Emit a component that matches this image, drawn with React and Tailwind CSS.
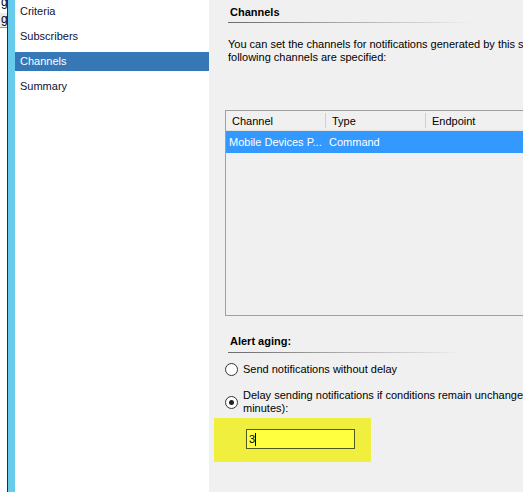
import React from 'react'

const font = { fontFamily: '"Liberation Sans", Arial, sans-serif' }

function Radio({ checked }) {
  return (
    <span className="w-[13px] h-[13px] shrink-0 rounded-full border border-[#333] bg-white flex items-center justify-center">
      {checked && <span className="w-[5px] h-[5px] rounded-full bg-[#222]" />}
    </span>
  )
}

function SectionTitle({ children }) {
  return <div className="ml-[21px] h-[14px] leading-[14px] font-bold text-black">{children}</div>
}

export default function App() {
  const steps = ['Criteria', 'Subscribers', 'Channels', 'Summary']

  return (
    <div className="w-[523px] h-[492px] overflow-hidden flex bg-[#f0f0f0] text-[11px] text-black" style={font}>
      {/* edge of the window behind */}
      <div className="w-[7px] shrink-0 bg-white overflow-hidden flex flex-col">
        <div className="h-[10px] -mt-[3px] leading-[10px] text-[12px] pl-[1px]">g</div>
        <div className="mt-[6px] h-[15px] leading-[13px] text-[12px] pl-[1px] bg-[#ececec] border-b border-[#9a9a9a]">g</div>
      </div>
      <div className="w-px shrink-0 bg-[#2b2b2b]" />
      <div className="w-[7px] shrink-0 bg-[#69cbec]" />

      {/* wizard steps */}
      <div className="w-[194px] shrink-0 bg-white pt-[2px] flex flex-col gap-[6px]">
        {steps.map((s) => (
          <div
            key={s}
            className={
              'h-[19px] leading-[19px] pl-[5px] ' +
              (s === 'Channels' ? 'bg-[#3677b5] text-white' : 'text-[#111133]')
            }
          >
            {s}
          </div>
        ))}
      </div>

      {/* page */}
      <div className="flex-1 min-w-0 overflow-hidden flex flex-col pt-[5px]">
        <SectionTitle>Channels</SectionTitle>
        <div className="ml-[19px] mt-[3px] w-[245px] h-px bg-linear-to-r from-[#6a6a6a] to-transparent" />

        <div className="ml-[19px] mt-[15px] leading-[13px] whitespace-nowrap">
          <div>You can set the channels for notifications generated by this subscription. The</div>
          <div>following channels are specified:</div>
        </div>

        <div className="ml-[16px] mt-[46px] w-[420px] h-[206px] shrink-0 border border-[#a0a0a0] bg-[#f0f0f0]">
          <div className="h-[20px] flex items-center border-b border-[#e2e2e2]">
            <div className="w-[99px] pl-[6px] pt-[3px] h-[19px] leading-[14px]">Channel</div>
            <div className="w-px h-[15px] bg-[#d0d0d0]" />
            <div className="w-[99px] pl-[6px] pt-[3px] h-[19px] leading-[14px]">Type</div>
            <div className="w-px h-[15px] bg-[#d0d0d0]" />
            <div className="flex-1 pl-[6px] pt-[3px] h-[19px] leading-[14px]">Endpoint</div>
          </div>
          <div className="h-[22px] flex items-center bg-[#3399ff] text-white whitespace-nowrap">
            <div className="w-[100px] pl-[3px]">Mobile Devices P...</div>
            <div className="pl-[3px]">Command</div>
          </div>
        </div>

        <div className="mt-[18px]">
          <SectionTitle>Alert aging:</SectionTitle>
        </div>
        <div className="ml-[19px] mt-[4px] w-[235px] h-px bg-linear-to-r from-[#6a6a6a] to-transparent" />

        <label className="ml-[16px] mt-[9px] h-[14px] flex items-center gap-[5px] whitespace-nowrap">
          <Radio />
          <span>Send notifications without delay</span>
        </label>

        <label className="ml-[16px] mt-[13px] flex items-center gap-[5px] whitespace-nowrap">
          <Radio checked />
          <span className="leading-[13px]">
            <span className="block">Delay sending notifications if conditions remain unchanged for the following period (in</span>
            <span className="block">minutes):</span>
          </span>
        </label>

        <div className="ml-[5px] mt-[3px] w-[157px] h-[44px] shrink-0 bg-[#f1ef3e] pt-[11px] pl-[32px]">
          <div className="w-[109px] h-[20px] border border-[#4e5a22] bg-[#ffff40] flex items-center pl-[2px]">
            <span className="leading-[14px]">3</span>
            <span className="w-px h-[13px] bg-black" />
          </div>
        </div>
      </div>
    </div>
  )
}
